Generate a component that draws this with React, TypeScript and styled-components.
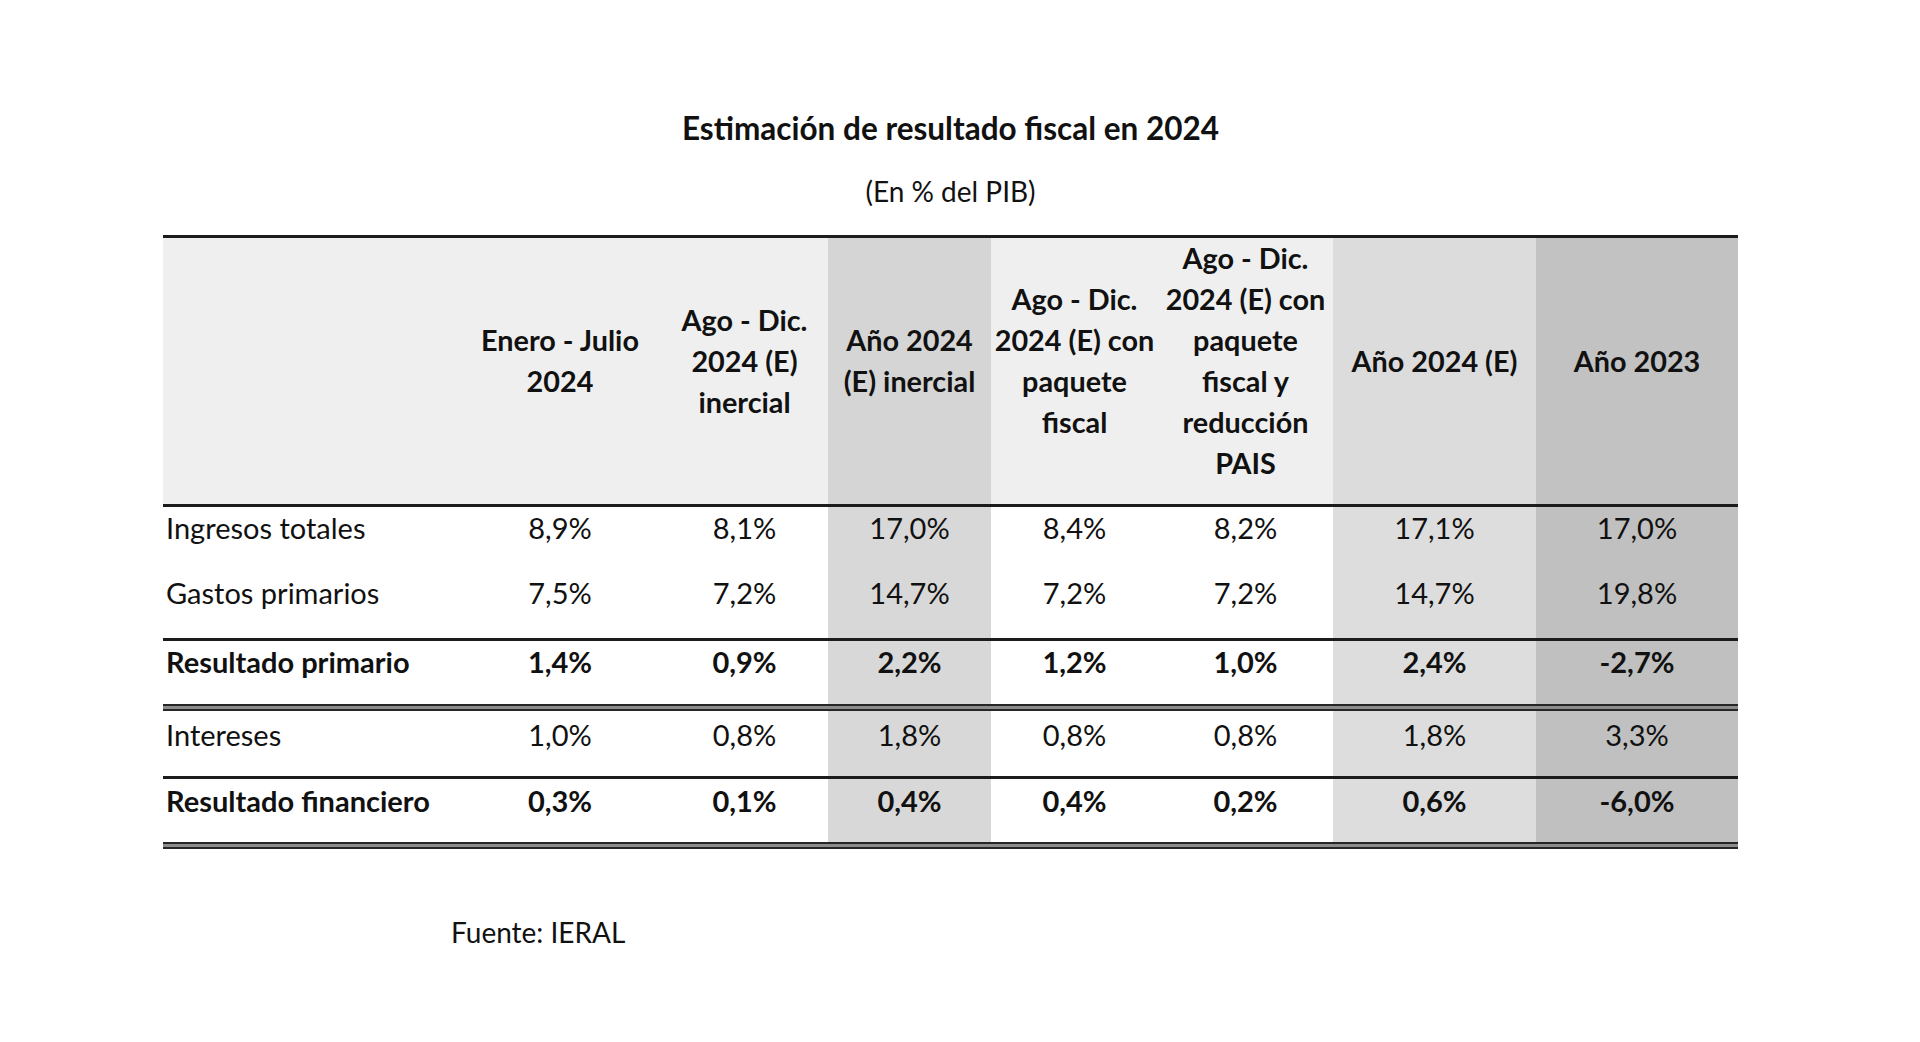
import styled, { createGlobalStyle } from "styled-components";

const GlobalStyle = createGlobalStyle`
  body {
    margin: 0;
    background: #ffffff;
    color: #111111;
    font-family: Lato, "Liberation Sans", sans-serif;
  }
`;

const COLS = "296px 202px 167px 163px 167px 175px 203px 202px";

// shade per column: header tone / body tone
const SHADES: Record<number, [string, string]> = {
  3: ["#d5d5d5", "#d8d8d8"],
  6: ["#dcdcdc", "#dddddd"],
  7: ["#c2c2c2", "#c0c0c0"],
};

const Page = styled.div`
  width: 1920px;
  height: 1042px;
  padding-top: 109px;
  box-sizing: border-box;
`;

const Sheet = styled.div`
  width: 1575px;
  margin-left: 163px;
  display: flex;
  flex-direction: column;
`;

const Title = styled.h1`
  margin: 0;
  text-align: center;
  font-size: 31.5px;
  font-weight: 700;
  line-height: 38px;
`;

const Subtitle = styled.p`
  margin: 27px 0 0;
  text-align: center;
  font-size: 28px;
  line-height: 34px;
`;

const Table = styled.div`
  margin-top: 27px;
  display: flex;
  flex-direction: column;
`;

const Rule = styled.div<{ $double?: boolean }>`
  height: ${(p) => (p.$double ? 7 : 3)}px;
  background: ${(p) =>
    p.$double
      ? "linear-gradient(#262626 0 2px, #8c8c8c 2px 5px, #262626 5px 7px)"
      : "#1c1c1c"};
`;

const HeadRow = styled.div`
  display: grid;
  grid-template-columns: ${COLS};
  height: 266px;
  background: #efefef;
`;

const HeadCell = styled.div<{ $bg?: string }>`
  display: flex;
  flex-direction: column;
  align-items: center;
  justify-content: center;
  padding-bottom: 20px;
  background: ${(p) => p.$bg || "transparent"};
  font-size: 28.8px;
  font-weight: 700;
  line-height: 41px;
  text-align: center;
  span {
    white-space: nowrap;
  }
`;

const Row = styled.div<{ $h: number; $pad: number; $bold?: boolean }>`
  display: grid;
  grid-template-columns: ${COLS};
  height: ${(p) => p.$h}px;
  font-size: 29px;
  line-height: 34px;
  font-weight: ${(p) => (p.$bold ? 700 : 400)};
  & > div {
    padding-top: ${(p) => p.$pad}px;
  }
`;

const Label = styled.div`
  padding-left: 3px;
  white-space: nowrap;
`;

const Cell = styled.div<{ $bg?: string }>`
  text-align: center;
  background: ${(p) => p.$bg || "transparent"};
`;

const Source = styled.p`
  margin: 66px 0 0 288px;
  font-size: 28px;
  line-height: 34px;
`;

const headers: string[][] = [
  ["Enero - Julio", "2024"],
  ["Ago - Dic.", "2024 (E)", "inercial"],
  ["Año 2024", "(E) inercial"],
  ["Ago - Dic.", "2024 (E) con", "paquete", "fiscal"],
  ["Ago - Dic.", "2024 (E) con", "paquete", "fiscal y", "reducción", "PAIS"],
  ["Año 2024 (E)"],
  ["Año 2023"],
];

type RowData = { label: string; values: string[]; bold?: boolean; h: number; pad: number };

const rows: RowData[] = [
  { label: "Ingresos totales", values: ["8,9%", "8,1%", "17,0%", "8,4%", "8,2%", "17,1%", "17,0%"], h: 66, pad: 4 },
  { label: "Gastos primarios", values: ["7,5%", "7,2%", "14,7%", "7,2%", "7,2%", "14,7%", "19,8%"], h: 65, pad: 3 },
  { label: "Resultado primario", values: ["1,4%", "0,9%", "2,2%", "1,2%", "1,0%", "2,4%", "-2,7%"], bold: true, h: 63, pad: 4 },
  { label: "Intereses", values: ["1,0%", "0,8%", "1,8%", "0,8%", "0,8%", "1,8%", "3,3%"], h: 65, pad: 7 },
  { label: "Resultado financiero", values: ["0,3%", "0,1%", "0,4%", "0,4%", "0,2%", "0,6%", "-6,0%"], bold: true, h: 63, pad: 5 },
];

function BodyRow({ row }: { row: RowData }) {
  return (
    <Row $h={row.h} $pad={row.pad} $bold={row.bold}>
      <Label>{row.label}</Label>
      {row.values.map((v, i) => (
        <Cell key={i} $bg={SHADES[i + 1]?.[1]}>
          {v}
        </Cell>
      ))}
    </Row>
  );
}

export default function App() {
  return (
    <>
      <GlobalStyle />
      <Page>
        <Sheet>
          <Title>Estimación de resultado fiscal en 2024</Title>
          <Subtitle>(En % del PIB)</Subtitle>
          <Table>
            <Rule />
            <HeadRow>
              <HeadCell />
              {headers.map((lines, i) => (
                <HeadCell key={i} $bg={SHADES[i + 1]?.[0]}>
                  {lines.map((l) => (
                    <span key={l}>{l}</span>
                  ))}
                </HeadCell>
              ))}
            </HeadRow>
            <Rule />
            <BodyRow row={rows[0]} />
            <BodyRow row={rows[1]} />
            <Rule />
            <BodyRow row={rows[2]} />
            <Rule $double />
            <BodyRow row={rows[3]} />
            <Rule />
            <BodyRow row={rows[4]} />
            <Rule $double />
          </Table>
          <Source>Fuente: IERAL</Source>
        </Sheet>
      </Page>
    </>
  );
}
